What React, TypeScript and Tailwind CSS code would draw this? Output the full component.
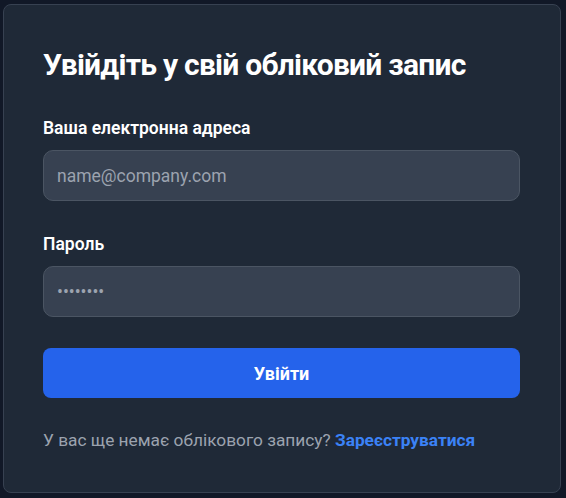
import { FC } from 'react';

const font = { fontFamily: 'Roboto, "Noto Sans", sans-serif' };

const Field: FC<{ label: string; type: string; placeholder: string }> = ({
  label,
  type,
  placeholder
}) => (
  <div className="flex flex-col gap-[10px]">
    <label className="text-[17.5px] leading-6 font-semibold text-white">{label}</label>
    <input
      type={type}
      placeholder={placeholder}
      className="h-[51px] w-full rounded-[10px] border border-[#4b5563] bg-[#374151] px-[13px] text-[17.5px] text-white placeholder:text-[#9ca3af] outline-none"
    />
  </div>
);

const App: FC = () => {
  return (
    <div className="min-h-[498px] bg-[#111827] pt-[4px] pl-[3px]" style={font}>
      <div className="w-[558px] rounded-lg border border-[#374151] bg-[#1f2937] py-10 pl-[39px] pr-10">
        <h1 className="text-[30px] leading-10 font-bold tracking-tight text-white">
          Увійдіть у свій обліковий запис
        </h1>
        <form className="mt-[31px] flex flex-col gap-[31px]" onSubmit={(e) => e.preventDefault()}>
          <Field label="Ваша електронна адреса" type="email" placeholder="name@company.com" />
          <Field label="Пароль" type="password" placeholder="••••••••" />
          <button
            type="submit"
            className="h-[50px] w-full rounded-lg bg-[#2563eb] text-[18px] font-bold text-white"
          >
            Увійти
          </button>
          <p className="-mt-px text-[17.3px] leading-6 text-[#9ca3af]">
            У вас ще немає облікового запису?{' '}
            <a href="#" className="font-bold text-[#3b82f6]">
              Зареєструватися
            </a>
          </p>
        </form>
      </div>
    </div>
  );
};

export default App;
